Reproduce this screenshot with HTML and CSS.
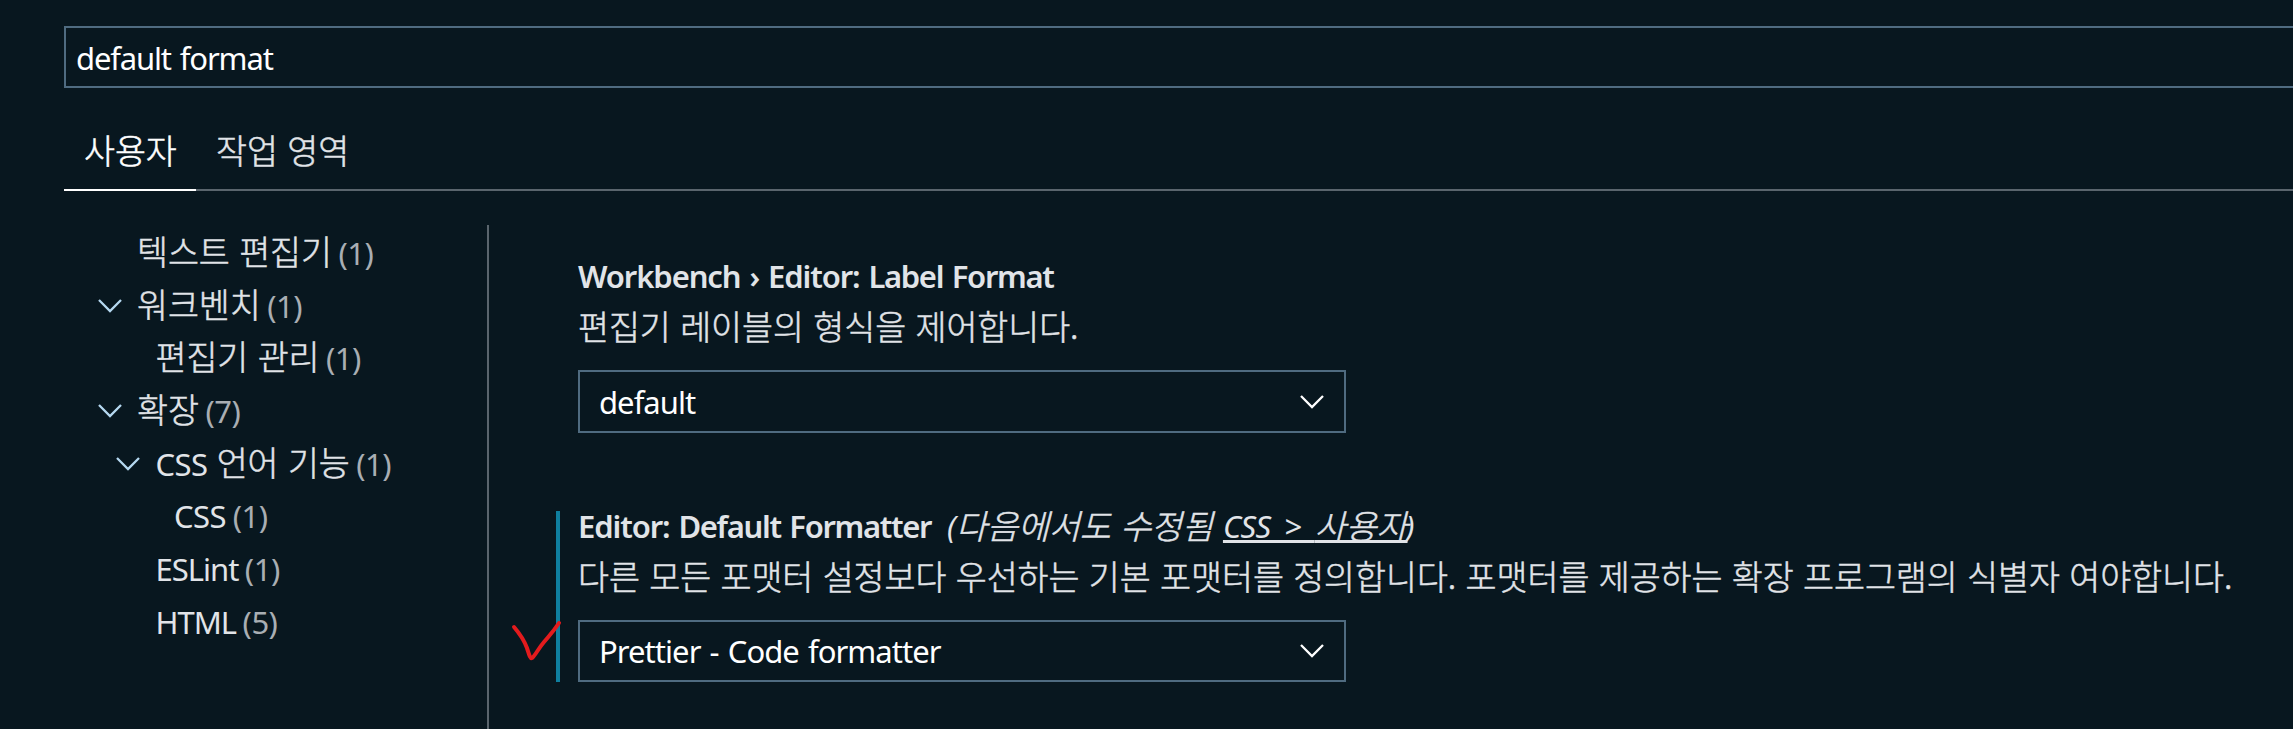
FILE: index.html
```
<!DOCTYPE html>
<html lang="ko">
<head>
<meta charset="utf-8">
<title>설정</title>
<link rel="stylesheet" href="styles.css">
</head>
<body>
<div class="settings">
  <div class="search"><span class="query">default format</span></div>
  <nav class="tabs">
    <div class="tab active"><span class="ko">사용자</span></div>
    <div class="tab"><span class="ko">작업 영역</span></div>
  </nav>
  <div class="body">
    <ul class="tree">
      <li class="l1"><span class="ko">텍스트 편집기</span><span class="n">(1)</span></li>
      <li class="l1"><svg class="chev" viewBox="0 0 24 14"><path d="M1 1 L12 12 L23 1"/></svg><span class="ko">워크벤치</span><span class="n">(1)</span></li>
      <li class="l2"><span class="ko">편집기 관리</span><span class="n">(1)</span></li>
      <li class="l1"><svg class="chev" viewBox="0 0 24 14"><path d="M1 1 L12 12 L23 1"/></svg><span class="ko">확장</span><span class="n">(7)</span></li>
      <li class="l2"><svg class="chev" viewBox="0 0 24 14"><path d="M1 1 L12 12 L23 1"/></svg><span class="css">CSS</span><span class="ko after">언어 기능</span><span class="n">(1)</span></li>
      <li class="l3"><span class="css">CSS</span><span class="n">(1)</span></li>
      <li class="l2"><span class="name">ESLint</span><span class="n">(1)</span></li>
      <li class="l2"><span class="name">HTML</span><span class="n">(5)</span></li>
    </ul>
    <main class="list">
      <section class="item">
        <h3><span class="cat">Workbench › Editor: </span><span class="label">Label Format</span></h3>
        <p><span class="ko">편집기 레이블의 형식을 제어합니다.</span></p>
        <div class="select"><span class="value">default</span><svg class="chev" viewBox="0 0 24 14"><path d="M1 1 L12 12 L23 1"/></svg></div>
      </section>
      <section class="item modified">
        <h3><span class="cat">Editor: </span><span class="label">Default Formatter</span><em><span>(</span><span class="ko">다음에서도 수정됨</span><a><span class="scope">CSS &gt; </span><span class="ko">사용자</span></a><span class="close">)</span></em></h3>
        <p><span class="ko">다른 모든 포맷터 설정보다 우선하는 기본 포맷터를 정의합니다. 포맷터를 제공하는 확장 프로그램의 식별자 여야합니다.</span></p>
        <div class="select"><span class="value">Prettier - Code formatter</span><svg class="chev" viewBox="0 0 24 14"><path d="M1 1 L12 12 L23 1"/></svg></div>
        <svg class="mark" viewBox="0 0 50 42"><path d="M4 7 C10 14 14 20 17 28 C19 34 20 39 22 38 C25 36 28 29 34 22 C39 16 43 12 49 3"/></svg>
      </section>
    </main>
  </div>
</div>
</body>
</html>
```
FILE: styles.css
```
* { box-sizing: border-box; margin: 0; padding: 0; }
body {
  width: 2293px; height: 729px; overflow: hidden;
  background: #08171f; color: #e1e4e8;
  font: 31px/52.7px "Noto Sans", "Noto Sans CJK KR", sans-serif;
}
span { white-space: pre; }
.ko {
  position: relative; top: 1px;
  font-family: "Noto Sans CJK KR", sans-serif; font-size: 33.7px; font-weight: 300;
  letter-spacing: -0.06px; line-height: 0; -webkit-text-stroke: 0.5px;
}
.settings { padding: 26px 0 0 64px; height: 729px; display: flex; flex-direction: column; }
.search { height: 62px; border: 2px solid #4f6b80; border-right: 0; padding-left: 10px; line-height: 60px; color: #fff; }
.query { letter-spacing: -1.15px; word-spacing: 2px; }
.tabs { display: flex; height: 103px; padding-top: 36px; border-bottom: 2px solid #5a656d; }
.tab { height: 67px; padding: 0 20px; line-height: 55px; }
.tab.active { width: 132px; border-bottom: 2px solid #fff; color: #fff; }
.body { flex: 1; display: flex; padding-top: 34px; }
.tree { width: 425px; border-right: 2px solid #5a656d; list-style: none; padding-top: 2px; }
.tree li { position: relative; height: 52.7px; display: flex; align-items: baseline; }
.tree .ko { top: 0; }
.l1 { padding-left: 73px; }
.l2 { padding-left: 91.5px; }
.l3 { padding-left: 110px; }
.n { color: #a9aeb3; margin-left: 6.5px; letter-spacing: -0.5px; }
.css { letter-spacing: -0.5px; }
.name { letter-spacing: -1px; }
.after { margin-left: 9px; }
.chev { width: 24px; height: 14px; fill: none; stroke: #fff; stroke-width: 2.3; }
.tree .chev { position: absolute; top: 19px; margin-left: -39.5px; stroke: #b5d8f0; }
.list { flex: 1; padding: 24px 0 0 89px; }
.item { position: relative; height: 250px; }
h3 { font-size: 31px; font-weight: 600; height: 52px; line-height: 54px; white-space: nowrap; }
.cat { letter-spacing: -1.1px; word-spacing: 2px; }
.label { letter-spacing: -1.35px; word-spacing: 2px; }
p { height: 69px; line-height: 53px; white-space: nowrap; }
.select {
  width: 768px; height: 63px; border: 2px solid #4f6b80; padding: 0 20px 0 19px;
  display: flex; align-items: center; justify-content: space-between;
  line-height: 60px; color: #fff;
}
.value { letter-spacing: -0.95px; word-spacing: 2px; }
em { font-weight: 400; margin-left: 16px; }
a { margin-left: 10px; text-decoration: underline; text-decoration-thickness: 3px; text-underline-offset: 2px; text-decoration-skip-ink: none; }
.scope { letter-spacing: -0.6px; word-spacing: 6px; }
.close { margin-left: -2px; }
.modified .select { height: 62px; }
.modified::before { content: ""; position: absolute; left: -22px; top: 12px; width: 4px; height: 171px; background: #0f7f9f; }
.mark { position: absolute; left: -68px; top: 121px; width: 50px; height: 42px; overflow: visible; fill: none; stroke: #e31b1d; stroke-width: 4; stroke-linecap: round; }
```
